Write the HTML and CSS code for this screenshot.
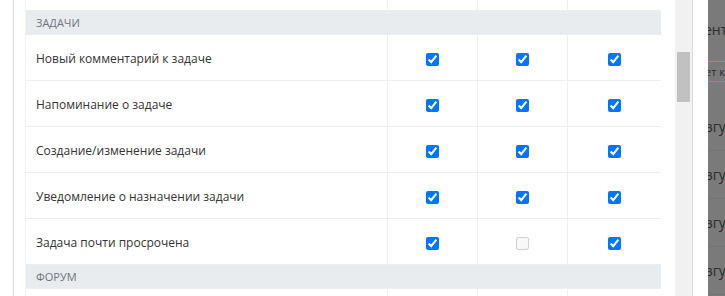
FILE: index.html
```html
<!DOCTYPE html>
<html>
<head>
  <title>Настройки уведомлений</title>
  <link rel="stylesheet" href="styles.css">
</head>
<body>

<div class="dialog">
  <div class="dialog-body">
    <div class="table-wrap">
      <table class="notify-table">
        <colgroup>
          <col class="col-name">
          <col class="col-check">
          <col class="col-check">
          <col class="col-check-last">
        </colgroup>
        <tr class="stub-row">
          <td></td><td></td><td></td><td></td>
        </tr>
        <tr class="group-row">
          <td colspan="4">Задачи</td>
        </tr>
        <tr>
          <td>Новый комментарий к задаче</td>
          <td><input type="checkbox" checked></td>
          <td><input type="checkbox" checked></td>
          <td><input type="checkbox" checked></td>
        </tr>
        <tr>
          <td>Напоминание о задаче</td>
          <td><input type="checkbox" checked></td>
          <td><input type="checkbox" checked></td>
          <td><input type="checkbox" checked></td>
        </tr>
        <tr>
          <td>Создание/изменение задачи</td>
          <td><input type="checkbox" checked></td>
          <td><input type="checkbox" checked></td>
          <td><input type="checkbox" checked></td>
        </tr>
        <tr>
          <td>Уведомление о назначении задачи</td>
          <td><input type="checkbox" checked></td>
          <td><input type="checkbox" checked></td>
          <td><input type="checkbox" checked></td>
        </tr>
        <tr>
          <td>Задача почти просрочена</td>
          <td><input type="checkbox" checked></td>
          <td><input type="checkbox" disabled></td>
          <td><input type="checkbox" checked></td>
        </tr>
        <tr class="group-row">
          <td colspan="4">Форум</td>
        </tr>
        <tr>
          <td></td><td></td><td></td><td></td>
        </tr>
      </table>
    </div>
    <div class="scrollbar">
      <div class="thumb"></div>
    </div>
  </div>
</div>

<!-- page behind the modal, dimmed -->
<div class="backdrop">
  <div class="bg-title">ентарии</div>
  <div class="bg-input">ет к</div>
  <div class="bg-list">
    <div class="bg-row">згу</div>
    <div class="bg-row">згу</div>
    <div class="bg-row">згу</div>
    <div class="bg-row">згу</div>
  </div>
</div>

</body>
</html>
```

FILE: styles.css
```css
body {
  margin: 0;
  height: 296px;
  overflow: hidden;
  display: flex;
  font-family: "Open Sans", sans-serif;
  background-color: #7a7a7a;
}

.dialog {
  width: 708px;
  flex-shrink: 0;
  background-color: white;
  padding-left: 13px;
  padding-right: 15px;
  box-sizing: border-box;
  display: flex;
}

.dialog-body {
  flex: 1;
  display: flex;
  border-left: 1px solid #dcdcdc;
  padding-left: 11px;
}

.table-wrap {
  width: 636px;
  overflow: hidden;
}

.notify-table {
  width: 636px;
  table-layout: fixed;
  border-collapse: collapse;
  font-size: 12px;
  color: #333;
}

.col-name { width: 362px; }
.col-check { width: 90px; }
.col-check-last { width: 94px; }

.notify-table td {
  height: 44px;
  padding: 1px 10px 0;
  border: 1px solid #eeeeee;
  text-align: center;
  vertical-align: middle;
}

.notify-table td:first-child {
  text-align: left;
  border-left-color: #f4f4f4;
}

.notify-table .stub-row td {
  height: 10px;
  padding: 0;
  border-top: none;
}

.group-row td {
  height: 23px;
  background-color: #e9ecef; /* light group header */
  font-size: 11px;
  text-transform: uppercase;
  color: #6c757d;
}

.notify-table .group-row td {
  text-align: left;
  padding-top: 0;
  padding-bottom: 0;
}

input[type="checkbox"] {
  width: 13px;
  height: 13px;
  margin: 0;
  vertical-align: middle;
}

.scrollbar {
  width: 17px;
  margin-left: 14px;
  background-color: #f1f1f1;
  border-right: 1px solid #dadada;
}

.thumb {
  width: 13px;
  height: 50px;
  margin: 52px 0 0 2px;
  background-color: #c1c1c1;
}

.backdrop {
  flex: 1;
  overflow: hidden;
  white-space: nowrap;
  color: #2c2c2c;
  font-size: 13px;
}

.bg-title {
  padding-top: 20px;
  height: 30px;
  margin-left: -4px;
  font-size: 14px;
}

.bg-input {
  margin-top: 11px;
  height: 19px;
  line-height: 19px;
  border-top: 1px solid #a98a4c;
  border-bottom: 1px solid #a98a4c;
  margin-left: -3px;
  font-size: 11px;
}

.bg-list {
  margin-top: 21px;
}

.bg-row {
  margin-left: -2px;
  height: 47px;
  line-height: 47px;
  font-size: 14px;
  border-bottom: 1px solid #737373;
}
```
